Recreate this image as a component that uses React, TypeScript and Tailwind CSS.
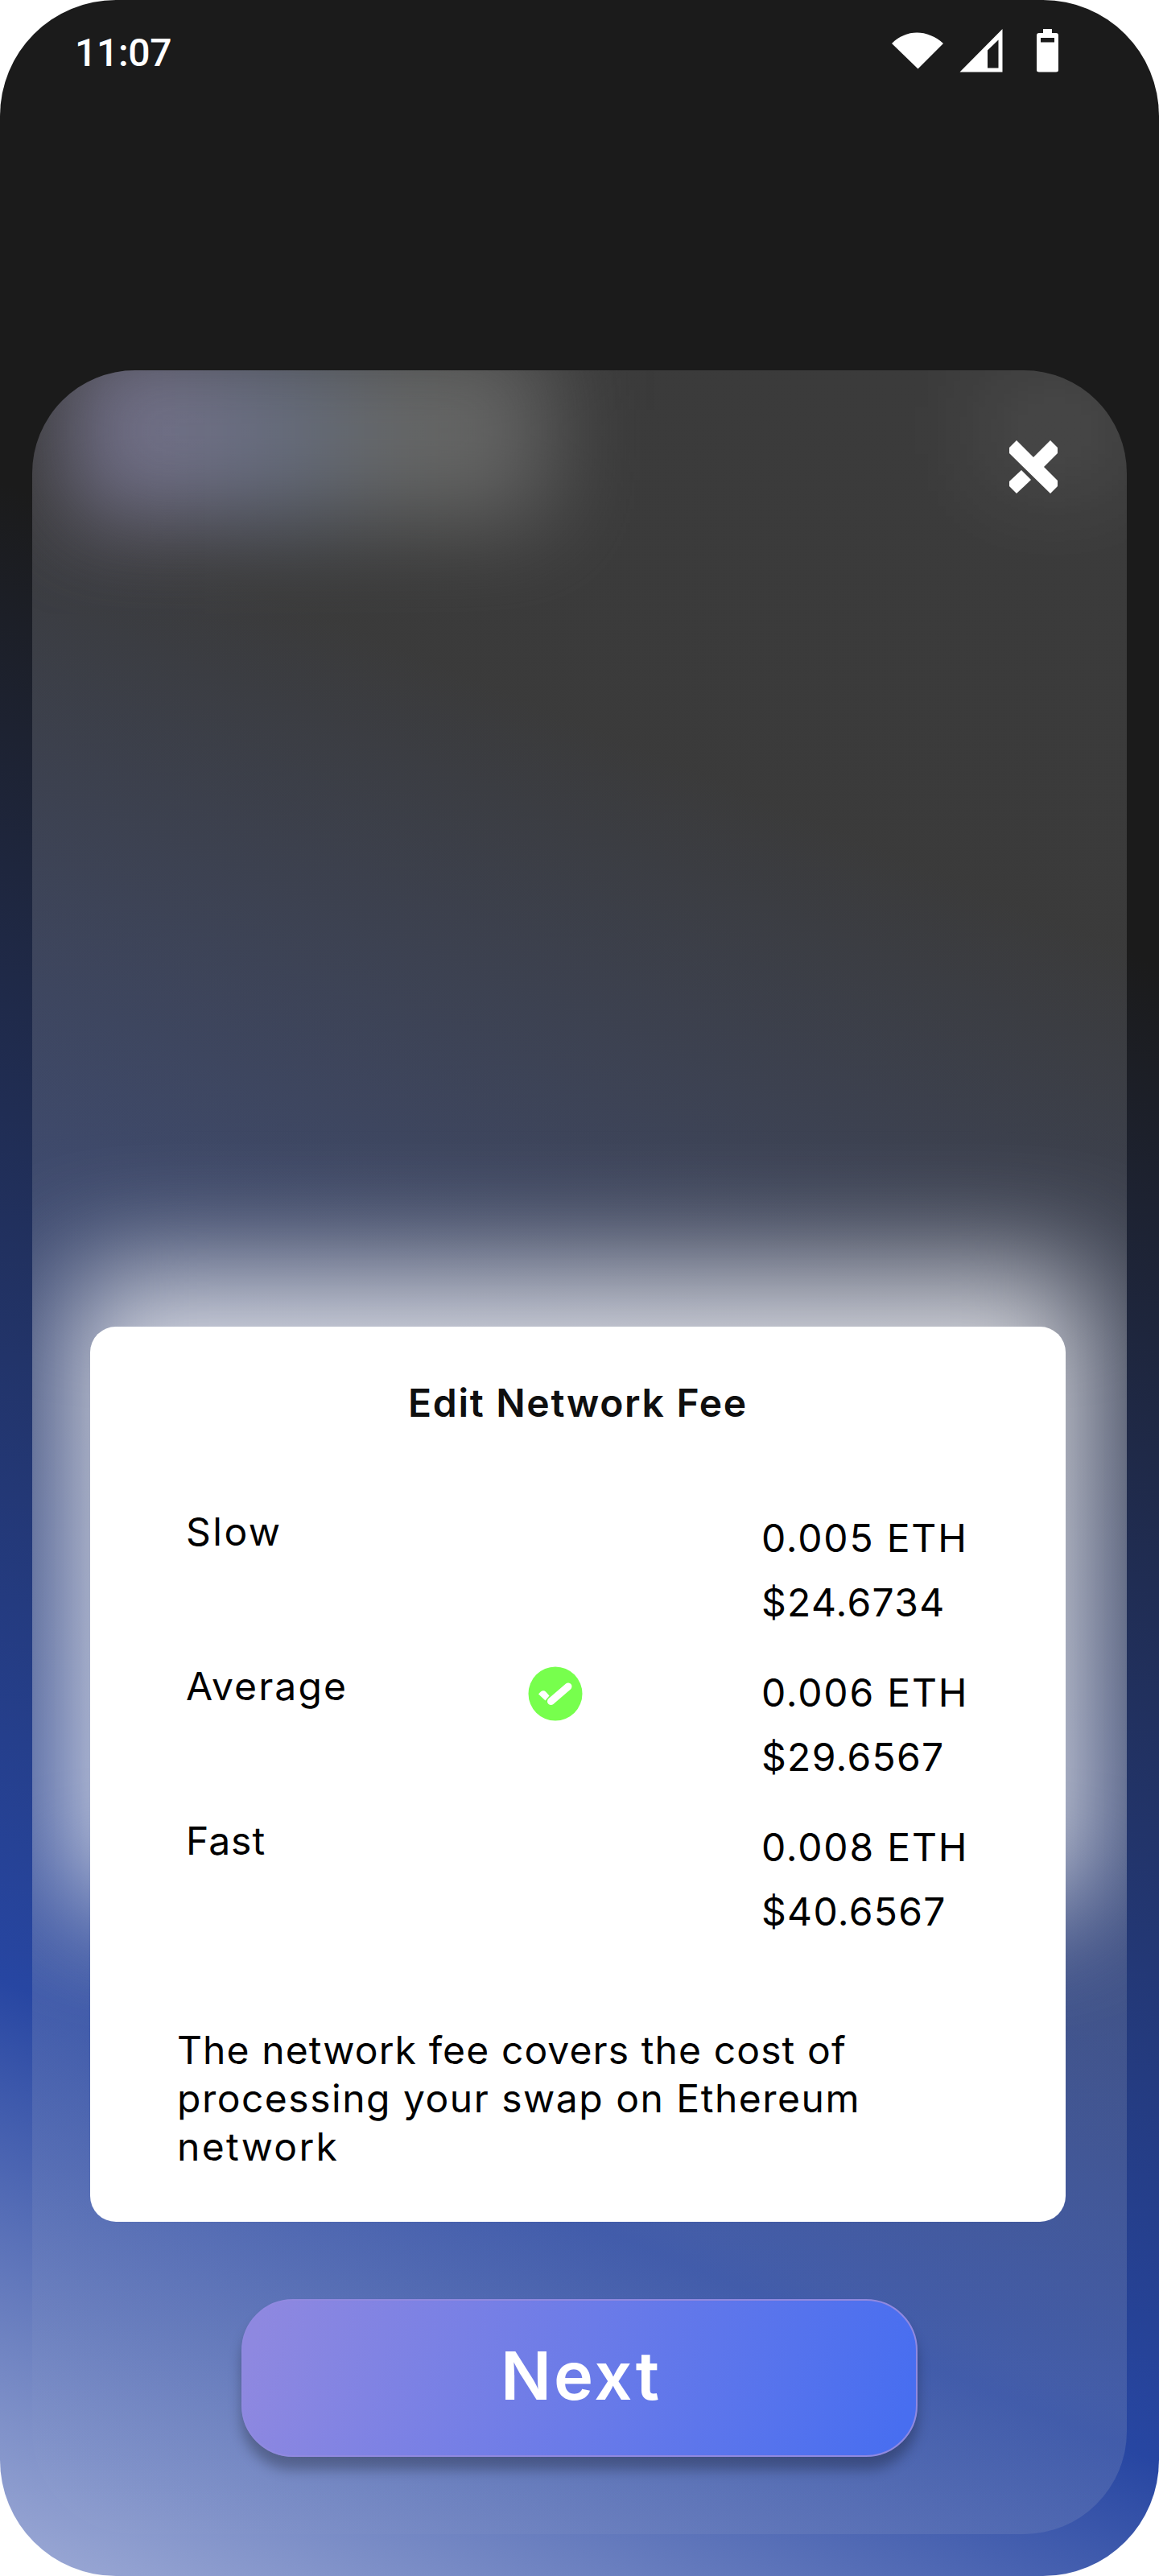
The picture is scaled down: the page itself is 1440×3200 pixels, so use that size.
import React from 'react';

const fees = [
    { label: 'Slow', eth: '0.005 ETH', usd: '$24.6734', selected: false, tracking: 'tracking-[2.5px]' },
    { label: 'Average', eth: '0.006 ETH', usd: '$29.6567', selected: true, tracking: 'tracking-[2.1px]' },
    { label: 'Fast', eth: '0.008 ETH', usd: '$40.6567', selected: false, tracking: 'tracking-[1px]' },
];

const StatusBar: React.FC = () => (
    <div className="flex h-[460px] shrink-0 items-start justify-between pl-[93px] pr-[124px]">
        <span className="mt-[37px] font-['Roboto'] text-[48px] font-medium leading-[58px] tracking-[-0.3px] text-white">11:07</span>
        <svg className="mt-[35px] h-[56px] w-[210px]" viewBox="0 0 210 56" fill="#fff">
            <path d="M2 19 C20 1 46 1 66 19 L34.500 50.500 Z" />
            <path fillRule="evenodd" d="M139.500 1 V54.500 H86.500 Z M121 27.500 L134.500 14.500 V49.500 H121 Z" />
            <path fillRule="evenodd" d="M190 1 H201 V6 H206 Q209 6 209 9 V52 Q209 54.500 206 54.500 H185 Q182 54.500 182 52 V9 Q182 6 185 6 H190 Z M187 12 V17.500 H204 V12 Z" />
        </svg>
    </div>
);

const CheckIcon: React.FC = () => (
    <svg className="h-[68px] w-[68px]" viewBox="0 0 68 68">
        <circle cx="34" cy="34" r="33.500" fill="#77ff4d" />
        <path d="M28.500 43.500 L50 25" stroke="#fff" strokeWidth="9" strokeLinecap="round" />
        <path d="M13 34.500 Q18 28 22 31.500 L26.500 36.500 L21.500 42.500 Z" fill="#fff" />
    </svg>
);

const CloseIcon: React.FC = () => (
    <svg className="h-[66px] w-[60px]" viewBox="0 0 60 66" fill="#fff">
        <path d="M9 0 L30 21 L51 0 L60 9 V16 L43 33 L60 50 V57 L51 66 L0 16 V9 Z" />
        <path d="M15 37 L27 49 L9 66 L0 57 V51 Z" />
    </svg>
);

const App: React.FC = () => {
    return (
        <div className="flex h-[3200px] w-[1440px] flex-col overflow-hidden rounded-[144px] bg-[linear-gradient(202.6deg,#1b1b1b_31.5%,#2746a2_80.5%,#9eabd6_100%)] font-['Inter',sans-serif]">
            <StatusBar />

            <div className="relative mx-10 flex h-[2688px] flex-col overflow-hidden rounded-[128px] bg-[linear-gradient(202.6deg,rgba(217,217,217,0.17)_0%,rgba(217,217,217,0.16)_78%,rgba(190,205,217,0.02)_96%)]">
                {/* Blurred content behind the sheet */}
                <div className="absolute left-[45px] top-[-40px] h-[230px] w-[600px] bg-[linear-gradient(90deg,#9a94c0_0%,#9394b8_25%,#7f8ca8_45%,#828482_68%,#7b7b7b_100%)] opacity-60 blur-[58px]" />
                <div className="absolute left-[1180px] top-[0px] h-[150px] w-[180px] bg-white/8 blur-[60px]" />
                <div className="absolute left-[45px] top-[1120px] h-[785px] w-[1270px] bg-[#f8f8fa]/82 blur-[74px]" />

                <button className="relative ml-[1214px] mt-[87px] h-[66px] w-[60px] shrink-0" aria-label="Close">
                    <CloseIcon />
                </button>

                <div className="relative ml-[72px] mt-[1035px] h-[1112px] w-[1212px] shrink-0 rounded-[32px] bg-white px-[108px] pt-[65px] text-[48px] leading-[60px] text-black">
                    <h1 className="text-center font-semibold tracking-[1.7px] text-[#0f0f0f]">Edit Network Fee</h1>

                    <div className="ml-[11px] mt-[96px] flex flex-col">
                        {fees.map((fee) => (
                            <div key={fee.label} className="flex h-[192px] items-start">
                                <div className={`mt-[4px] w-[425px] ${fee.tracking}`}>{fee.label}</div>
                                <div className="w-[290px] pt-[9px]">{fee.selected && <CheckIcon />}</div>
                                <div className="mt-[2px] flex flex-col leading-[80px]">
                                    <span className="tracking-[1.8px]">{fee.eth}</span>
                                    <span className="tracking-[1.3px]">{fee.usd}</span>
                                </div>
                            </div>
                        ))}
                    </div>

                    <p className="mt-[72px] whitespace-nowrap">
                        <span className="tracking-[1.1px]">The network fee covers the cost of</span><br />
                        <span className="tracking-[1.5px]">processing your swap on Ethereum</span><br />
                        <span className="tracking-[2.3px]">network</span>
                    </p>
                </div>

                <button className="relative ml-[260px] mt-[96px] h-[196px] w-[840px] shrink-0 rounded-[64px] border-2 border-[#9089e0] bg-[linear-gradient(105deg,#8e88e0_3%,#486ef0_97%)] pb-[5px] pl-[4px] text-[83px] font-semibold tracking-[3px] text-white shadow-[0_16px_16px_rgba(0,0,0,0.28)]">
                    Next
                </button>
            </div>
        </div>
    );
};

export default App;
